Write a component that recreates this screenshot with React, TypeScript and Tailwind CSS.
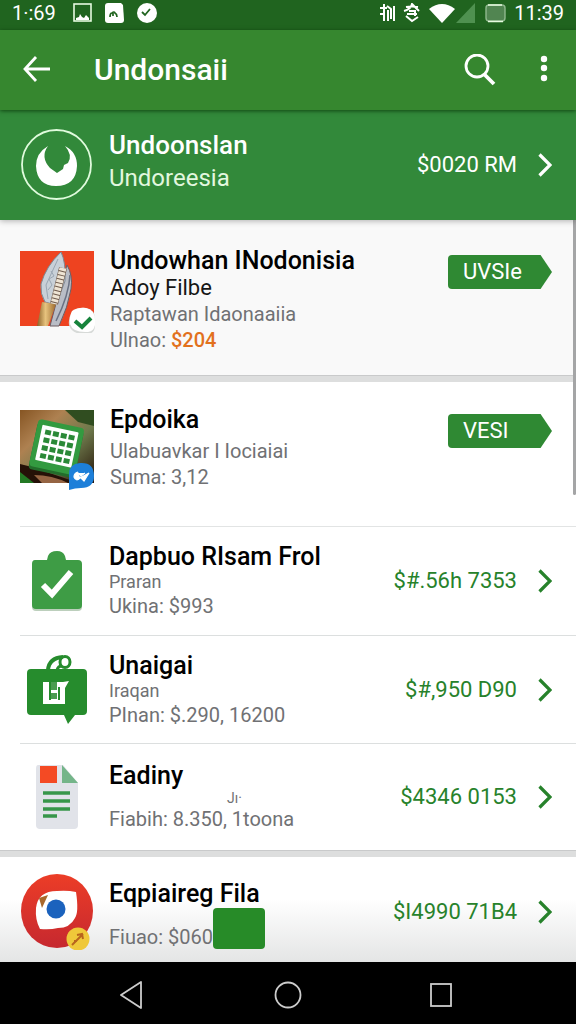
import React from 'react';

interface ListRowProps {
  icon: React.ReactNode;
  title: string;
  price: string;
  className?: string;
  children?: React.ReactNode;
}

function StatusBar() {
  return (
    <div className="flex h-[30px] items-center justify-between bg-[#20641f] px-3 pb-1 text-[20px] leading-[26px] text-white">
      <div className="flex items-center">
        <span className="w-[61px]">1·:69</span>
        <svg className="mr-3 h-5 w-5" viewBox="0 0 20 20">
          <rect x="1" y="1" width="17" height="17" fill="none" stroke="#e6fbe0" strokeWidth="1.6" />
          <path d="M3 17v-2l3-1 1-3 2 3 2 1 2-3 2 2 1 1v2z" fill="#fff" />
        </svg>
        <svg className="mr-3 h-5 w-5" viewBox="0 0 20 20">
          <path d="M3 0h13l2 2 1 15q0 3-3 3H3q-3 0-3-3V3q0-3 3-3z" fill="#fff" />
          <path d="M5 14q0-4 2-4 2-2 3 0 2 1 2 4M8 10v3" fill="none" stroke="#20641f" strokeWidth="1.7" />
        </svg>
        <svg className="h-5 w-5" viewBox="0 0 20 20">
          <circle cx="10" cy="10" r="10" fill="#fff" />
          <path d="M5 9l3 3 5-6" fill="none" stroke="#20641f" strokeWidth="1.8" />
        </svg>
      </div>
      <div className="flex items-center">
        <svg className="mr-2 h-5 w-[15px]" viewBox="0 0 15 20" fill="none" stroke="#fff" strokeWidth="2">
          <path d="M4 1v17M0 5h7M0 11h3M7 3l4 3v10M8 7v11M14 3v15" />
        </svg>
        <svg className="mr-2 h-5 w-[18px]" viewBox="0 0 18 20" fill="none" stroke="#fff" strokeWidth="2">
          <path d="M1 8Q8 6 9 1l7 7M3 4q6-1 12 0M4 11h10M6 8h6v5M3 13l6 5 6-4" />
        </svg>
        <svg className="mr-px h-5 w-[26px]" viewBox="0 0 26 20">
          <path d="M0 6Q13-4 26 6L13 20z" fill="#fff" />
        </svg>
        <svg className="mr-[10px] h-5 w-[19px]" viewBox="0 0 19 20">
          <path d="M19 0v20H0z" fill="#4f9150" />
        </svg>
        <svg className="mr-2 h-5 w-[21px]" viewBox="0 0 21 20">
          <rect x="1" y="2" width="19" height="16" rx="3" fill="#518551" stroke="#8fb88d" strokeWidth="1.4" />
          <path d="M3 18.5h15M3 2h14" stroke="#e6fbe0" strokeWidth="1.6" />
        </svg>
        <span>11:39</span>
      </div>
    </div>
  );
}

function AppBar() {
  return (
    <header className="relative z-20 flex h-20 items-center bg-[#36872f] pl-[22px] pr-5 text-white shadow-[0_1px_4px_rgba(0,40,0,0.7)]">
      <button type="button" aria-label="Back" className="mr-11">
        <svg className="h-7 w-7" viewBox="0 0 28 28" fill="none" stroke="#fff" strokeWidth="2.8">
          <path d="M28 13H4M14 1L3 13l11 12" />
        </svg>
      </button>
      <h1 className="flex-1 text-[30px] font-medium leading-9">Undonsaii</h1>
      <button type="button" aria-label="Search" className="mr-9">
        <svg className="h-8 w-8" viewBox="0 0 32 32" fill="none" stroke="#fff" strokeWidth="2.8">
          <circle cx="13" cy="12" r="11" />
          <path d="M20.500 20.500L30 30" strokeWidth="3.8" />
        </svg>
      </button>
      <button type="button" aria-label="More">
        <svg className="h-8 w-6" viewBox="0 0 24 32" fill="#fff">
          <circle cx="12" cy="5" r="3.2" />
          <circle cx="12" cy="14" r="3.2" />
          <circle cx="12" cy="24" r="3.2" />
        </svg>
      </button>
    </header>
  );
}

function Chevron({ className = '' }: { className?: string }) {
  return (
    <svg className={`h-6 w-[14px] ${className}`} viewBox="0 0 14 24" fill="none" stroke="currentColor" strokeWidth="3.2">
      <path d="M1.500 1.500L12 12 1.500 22.500" />
    </svg>
  );
}

function Tag({ label }: { label: string }) {
  return (
    <button
      type="button"
      className="mt-2 h-[34px] w-[104px] shrink-0 rounded-l bg-[#2f8933] pl-[15px] text-left text-[22px] leading-[34px] text-white [clip-path:polygon(0_0,89%_0,100%_50%,89%_100%,0_100%)]"
    >
      {label}
    </button>
  );
}

function ListRow({ icon, title, price, className = '', children }: ListRowProps) {
  return (
    <li className={`flex items-center pr-6 ${className}`}>
      <div className="mr-4 flex w-[73px] shrink-0 justify-center">{icon}</div>
      <div className="flex-1 self-end">
        <h2 className="text-[25px] font-medium leading-7 text-black">{title}</h2>
        {children}
      </div>
      <a href="#" className="flex items-center gap-[21px] text-[#27822b]">
        <span className="text-[22px]">{price}</span>
        <Chevron />
      </a>
    </li>
  );
}

function SpearThumb() {
  return (
    <svg className="h-[82px] w-[78px]" viewBox="0 0 78 82">
      <defs>
        <linearGradient id="shaft" x1="0" x2="1">
          <stop offset="0" stopColor="#8a6128" />
          <stop offset="0.45" stopColor="#e7c37e" />
          <stop offset="1" stopColor="#9c6b2f" />
        </linearGradient>
      </defs>
      <rect width="74" height="75" fill="#ee4320" />
      <path d="M47 14q6 10 4 24-3 18-12 37h-9l8-30z" fill="#b9bdc6" stroke="#6b5d63" />
      <path d="M41 1q-15 14-20 32-1 10 4 18l11 3 9-24Q46 11 41 1z" fill="#c8d0d8" stroke="#7f8791" />
      <path d="M38 8L26 34l2 14M31 20l3 5-5 3 3 6-4 5" stroke="#9aa6b3" fill="none" />
      <path d="M22 51l14 2-8 22H17z" fill="url(#shaft)" />
      <path d="M43 17L34 53" stroke="#6e5a4c" strokeWidth="8" />
      <path d="M43 17L34 53" stroke="#eee4d4" strokeWidth="7" strokeDasharray="3 1" />
      <path d="M50 24q-1 20-14 46" stroke="#6a7183" strokeWidth="1.5" fill="none" />
      <path d="M52 61q6-5 14-4 10 2 9 13v6q-1 7-8 7-15 1-18-9-1-7 3-13z" fill="#d7dad8" />
      <path d="M52 60q6-4 14-3 9 2 9 12v5q-1 6-7 7-15 1-18-8-1-7 2-13z" fill="#fff" />
      <path d="M55 70l7 6 9-9" stroke="#16833b" strokeWidth="4" fill="none" />
    </svg>
  );
}

function GridThumb() {
  return (
    <svg className="h-[82px] w-[78px]" viewBox="0 0 78 82">
      <defs>
        <linearGradient id="wood" x1="0" y1="0" x2="1" y2="1">
          <stop offset="0" stopColor="#865523" />
          <stop offset="0.3" stopColor="#ae8151" />
          <stop offset="0.6" stopColor="#6e7a4c" />
          <stop offset="1" stopColor="#251207" />
        </linearGradient>
      </defs>
      <rect width="74" height="73" fill="url(#wood)" />
      <path d="M45 0h29v16L58 12z" fill="#304d20" />
      <path d="M0 54l12 3 38 13v3H0z" fill="#251107" />
      <path d="M0 62l14 11H0z" fill="#237924" />
      <path d="M14 65q18 0 34 8H22z" fill="#956443" />
      <g transform="rotate(12 36 38)">
        <rect x="13" y="16" width="47" height="48" rx="4" fill="#236d2b" />
        <rect x="13" y="13" width="47" height="48" rx="4" fill="#339a40" />
        <rect x="18" y="18" width="37" height="36" rx="1" fill="#fff" />
        {[22, 30, 38, 46].map((y) =>
          [22, 30, 38, 46].map((x) => <rect key={`${x}-${y}`} x={x} y={y} width="6" height="5" fill="#2a8937" />)
        )}
      </g>
      <path d="M49 80V64Q49 54 60 53q14-1 14 13 0 12-13 12-6 0-12 2z" fill="#1d7fd9" />
      <path d="M58 62q-4 1-4 5 2 5 6 1l9-5-5 8-4-4m-2-4l3 3 4-3" fill="#fff" stroke="#fff" strokeWidth="1.2" />
    </svg>
  );
}

function ClipboardIcon() {
  return (
    <svg className="h-[60px] w-[52px]" viewBox="0 0 52 60">
      <rect x="1" y="11" width="50" height="49" rx="4" fill="#bccfbc" />
      <path d="M4 9h12l1-4q2-5 9-5 6 0 8 5l1 4h12q4 0 4 4v41q0 4-4 4H5q-4 0-4-4V13q0-4 3-4z" fill="#3e9c45" />
      <path d="M12 34l9 9 19-22" stroke="#fff" strokeWidth="6" fill="none" />
    </svg>
  );
}

function BagIcon() {
  return (
    <svg className="h-[70px] w-[60px]" viewBox="0 0 60 70">
      <path d="M21 15q1-12 15-13" stroke="#268c2d" strokeWidth="4" fill="none" />
      <ellipse cx="38" cy="7" rx="5" ry="5.500" stroke="#268c2d" strokeWidth="3" fill="none" />
      <path d="M35 11q-4 0-5 4" stroke="#268c2d" strokeWidth="3" fill="none" />
      <path d="M4 14h52q4 0 4 4v38q0 4-4 4h-8l-7 9-4-9H4q-4 0-4-4V18q0-4 4-4z" fill="#268c2d" />
      <path d="M16 27h20l6-1-4 7v16H16z" fill="#fff" />
      <path d="M22 27h2v18h-2z" fill="#268c2d" />
      <path d="M24 27h6v8h-6zM24 38h6v6h-6z" fill="#4b9c50" />
      <path d="M31 32h2v13h-2z" fill="#268c2d" />
    </svg>
  );
}

function DocIcon() {
  return (
    <svg className="h-[64px] w-11" viewBox="0 0 44 64">
      <path d="M3 0h25l15 18v42q0 4-4 4H5q-4 0-4-4V4q0-4 2-4z" fill="#e1e3e9" />
      <path d="M27 0l16 18H27z" fill="#74b589" />
      <rect x="5" y="1" width="17" height="17" fill="#f44a24" />
      <path d="M8 28h27M8 36h27M8 44h27M8 51h14" stroke="#37964a" strokeWidth="3.500" />
    </svg>
  );
}

function EyeIcon() {
  return (
    <svg className="h-[76px] w-[72px]" viewBox="0 0 72 76">
      <defs>
        <linearGradient id="eyeRed" x1="0" y1="0" x2="0" y2="1">
          <stop offset="0" stopColor="#ec3d27" />
          <stop offset="1" stopColor="#c6282f" />
        </linearGradient>
      </defs>
      <ellipse cx="36" cy="37" rx="36" ry="37" fill="url(#eyeRed)" />
      <path d="M15 34Q17 17 36 17q10-1 19 1 3 20-1 26-5 10-17 10-8 2-18 1-5-9-4-21z" fill="#fff" />
      <path d="M18 24l9-3-6 13z" fill="#a8682c" />
      <circle cx="35" cy="35" r="9.500" fill="#1b62bd" />
      <circle cx="57" cy="65" r="11.500" fill="#efc83a" />
      <path d="M51 71l11-11M56 61l5-1 1 5M53 67h3" stroke="#b8651d" strokeWidth="2" fill="none" />
    </svg>
  );
}

function NavBar() {
  return (
    <nav className="grid h-[62px] grid-cols-3 items-center bg-black px-[54px] pt-1">
      <button type="button" aria-label="Back" className="flex justify-center">
        <svg className="h-7 w-6" viewBox="0 0 24 28" fill="none" stroke="#ccc" strokeWidth="1.8" strokeLinejoin="round">
          <path d="M21 1L1 14l20 13z" />
        </svg>
      </button>
      <button type="button" aria-label="Home" className="flex justify-center">
        <svg className="h-7 w-7" viewBox="0 0 28 28" fill="none" stroke="#ccc" strokeWidth="1.8">
          <circle cx="14" cy="14" r="12.500" />
        </svg>
      </button>
      <button type="button" aria-label="Recents" className="flex justify-center">
        <svg className="h-7 w-7" viewBox="0 0 28 28" fill="none" stroke="#ccc" strokeWidth="1.8">
          <rect x="1" y="3" width="20" height="22" />
        </svg>
      </button>
    </nav>
  );
}

export default function App() {
  return (
    <div className="w-full bg-white font-['Roboto',sans-serif] text-[20px] leading-[26px] text-[#707174]">
      <StatusBar />
      <AppBar />

      {/* Account banner */}
      <section className="relative z-10 flex h-[110px] items-center bg-[#32893a] pl-5 pr-6 text-white shadow-[0_1px_6px_rgba(0,0,0,0.3)]">
        <svg className="mr-4 h-[73px] w-[73px]" viewBox="0 0 73 73">
          <circle cx="36.500" cy="35.500" r="34.500" fill="none" stroke="#e0fbdd" strokeWidth="1.8" />
          <path d="M28 17Q16 24 16 37q1 20 20 20 20 0 21-20 0-14-12-20 8 9 3 17l-4 2-1 4-6 4-7-5Q20 28 28 17z" fill="#fff" />
        </svg>
        <div className="flex-1 pb-2">
          <h2 className="text-[26px] font-medium leading-[34px]">Undoonslan</h2>
          <p className="text-[24px] leading-8 text-[#e2f7df]">Undoreesia</p>
        </div>
        <a href="#" className="flex items-center gap-[21px]">
          <span className="text-[22px]">$0020 RM</span>
          <Chevron />
        </a>
      </section>

      <main className="relative">
        <div className="absolute right-0 top-0 h-[275px] w-[3px] rounded-b bg-[#a4a5a6]" />

        <article className="flex items-start bg-[#f9f9f9] pb-[22px] pl-5 pr-6 pt-[27px]">
          <div className="mr-3 mt-1 shrink-0">
            <SpearThumb />
          </div>
          <div className="flex-1">
            <h2 className="text-[25px] font-medium leading-7 text-black">Undowhan INodonisia</h2>
            <p className="text-[22px] text-[#161616]">Adoy Filbe</p>
            <p>Raptawan Idaonaaiia</p>
            <p>
              Ulnao: <span className="font-medium text-[#e2711d]">$204</span>
            </p>
          </div>
          <Tag label="UVSIe" />
        </article>

        <div className="h-[7px] border-t border-[#c9cacb] bg-[#dddede]" />

        <article className="flex items-start pb-[34px] pl-5 pr-6 pt-6">
          <div className="mr-3 mt-1 shrink-0">
            <GridThumb />
          </div>
          <div className="flex-1">
            <h2 className="mb-1 text-[25px] font-medium leading-7 text-black">Epdoika</h2>
            <p>Ulabuavkar I Iociaiai</p>
            <p>Suma: 3,12</p>
          </div>
          <Tag label="VESI" />
        </article>

        <ul className="pl-5">
          <ListRow icon={<ClipboardIcon />} title="Dapbuo RIsam Frol" price="$#.56h 7353" className="border-t border-[#e2e4e4] py-4">
            <p className="text-[18px] leading-[22px]">Praran</p>
            <p>Ukina: $993</p>
          </ListRow>
          <ListRow icon={<BagIcon />} title="Unaigai" price="$#,950 D90" className="border-t border-[#dcdfdf] pb-[15px] pt-4">
            <p className="text-[18px] leading-[22px]">Iraqan</p>
            <p>PInan: $.290, 16200</p>
          </ListRow>
          <ListRow icon={<DocIcon />} title="Eadiny" price="$4346 0153" className="border-t border-[#dcdfdf] py-[18px]">
            <p className="pl-[118px] text-[14px] leading-4">Jı·</p>
            <p>Fiabih: 8.350, 1toona</p>
          </ListRow>
        </ul>

        <div className="h-[7px] border-t border-[#c9cacb] bg-[#dddede]" />

        <ul className="bg-linear-to-b from-white from-40% to-[#e4e5e5] pl-5">
          <ListRow icon={<EyeIcon />} title="Eqpiaireg Fila" price="$I4990 71B4" className="pb-3 pt-[17px]">
            <div className="flex">
              <p className="pt-4">Fiuao: $060</p>
              <div className="h-[41px] w-[52px] rounded-sm bg-[#278b28]" />
            </div>
          </ListRow>
        </ul>
      </main>

      <NavBar />
    </div>
  );
}
